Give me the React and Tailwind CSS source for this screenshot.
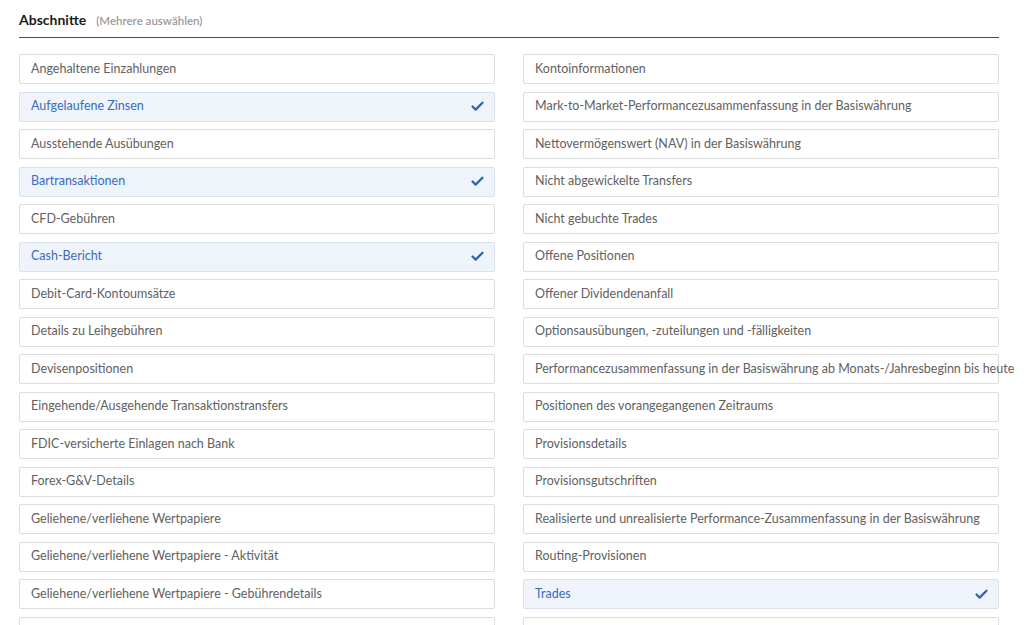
import React from "react";
import { Check } from "lucide-react";

const left = [
    ["Angehaltene Einzahlungen", false],
    ["Aufgelaufene Zinsen", true],
    ["Ausstehende Ausübungen", false],
    ["Bartransaktionen", true],
    ["CFD-Gebühren", false],
    ["Cash-Bericht", true],
    ["Debit-Card-Kontoumsätze", false],
    ["Details zu Leihgebühren", false],
    ["Devisenpositionen", false],
    ["Eingehende/Ausgehende Transaktionstransfers", false],
    ["FDIC-versicherte Einlagen nach Bank", false],
    ["Forex-G&V-Details", false],
    ["Geliehene/verliehene Wertpapiere", false],
    ["Geliehene/verliehene Wertpapiere - Aktivität", false],
    ["Geliehene/verliehene Wertpapiere - Gebührendetails", false],
    ["", false],
];

const right = [
    ["Kontoinformationen", false],
    ["Mark-to-Market-Performancezusammenfassung in der Basiswährung", false],
    ["Nettovermögenswert (NAV) in der Basiswährung", false],
    ["Nicht abgewickelte Transfers", false],
    ["Nicht gebuchte Trades", false],
    ["Offene Positionen", false],
    ["Offener Dividendenanfall", false],
    ["Optionsausübungen, -zuteilungen und -fälligkeiten", false],
    ["Performancezusammenfassung in der Basiswährung ab Monats-/Jahresbeginn bis heute", false],
    ["Positionen des vorangegangenen Zeitraums", false],
    ["Provisionsdetails", false],
    ["Provisionsgutschriften", false],
    ["Realisierte und unrealisierte Performance-Zusammenfassung in der Basiswährung", false],
    ["Routing-Provisionen", false],
    ["Trades", true],
    ["", false],
];

const Row = ({ label, selected }) => (
    <div
        className={
            "h-[30px] shrink-0 flex items-center justify-between pl-[11px] pr-[9px] rounded-[2px] border whitespace-nowrap " +
            (selected
                ? "bg-[#eff4fb] border-[#d9e1ec] text-[#3a6bb9]"
                : "bg-white border-[#dcdcdc] text-[#616161]")
        }
    >
        <span className="text-[12.5px]">{label}</span>
        {selected && <Check size={15} strokeWidth={3.6} className="text-[#2d63b5] shrink-0" />}
    </div>
);

export default function App() {
    return (
        <div className="w-[1024px] h-[625px] overflow-hidden bg-white pl-[19px] pr-[25px] pt-[9px] font-['Lato','Liberation_Sans',sans-serif]">
            {/* Kopfzeile */}
            <div className="flex items-baseline gap-[10px] pb-[7px] border-b border-[#4a4a4a]">
                <h3 className="text-[14px] font-bold text-[#1a1a1a]">Abschnitte</h3>
                <span className="text-[11.5px] font-semibold text-[#9a9a9a]">(Mehrere auswählen)</span>
            </div>

            <div className="flex gap-[28px] mt-[16px]">
                <div className="flex-1 basis-0 min-w-0 flex flex-col gap-[7.5px]">
                    {left.map(([l, s], i) => <Row key={i} label={l} selected={s} />)}
                </div>
                <div className="flex-1 basis-0 min-w-0 flex flex-col gap-[7.5px]">
                    {right.map(([l, s], i) => <Row key={i} label={l} selected={s} />)}
                </div>
            </div>
        </div>
    );
}
